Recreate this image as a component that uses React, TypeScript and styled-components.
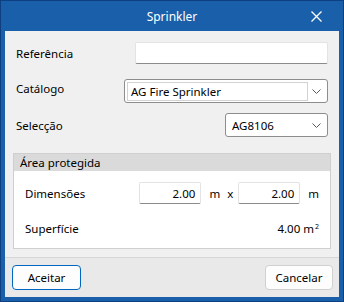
import styled, { createGlobalStyle } from 'styled-components';

const GlobalStyle = createGlobalStyle`
  html, body {
    margin: 0;
    padding: 0;
    background: #ffffff;
  }
  body {
    font-family: "Noto Sans", "Liberation Sans", sans-serif;
    font-size: 11.5px;
    color: #000000;
  }
`;

const Window = styled.div`
  width: 344px;
  height: 302px;
  box-sizing: border-box;
  border: 1px solid #0e3f80;
  background: #1a5fa9;
  display: flex;
  flex-direction: column;
  padding: 0 4px 4px;
`;

const TitleBar = styled.div`
  height: 30px;
  flex-shrink: 0;
  display: flex;
  align-items: center;
  justify-content: center;
  position: relative;
  color: #ffffff;
  font-size: 12px;
`;

const CloseButton = styled.div`
  position: absolute;
  right: 17px;
  top: 10px;
  width: 11px;
  height: 11px;
  display: flex;
`;

const Body = styled.div`
  flex: 1;
  background: #f0f0f0;
  display: flex;
  flex-direction: column;
`;

const Form = styled.div`
  flex: 1;
  padding: 11px 11px 0 11px;
  display: flex;
  flex-direction: column;
`;

const Row = styled.div<{ $top: number; $height: number }>`
  display: flex;
  align-items: center;
  justify-content: space-between;
  margin-top: ${(p) => p.$top}px;
  height: ${(p) => p.$height}px;
`;

const Label = styled.span<{ $lift?: number }>`
  position: relative;
  top: ${(p) => -(p.$lift ?? 0)}px;
`;

const TextBox = styled.div<{ $width: number }>`
  width: ${(p) => p.$width}px;
  height: 22px;
  box-sizing: border-box;
  background: #ffffff;
  border: 1px solid #e3e3e3;
  border-bottom-color: #8b8b8b;
  border-radius: 2px;
  display: flex;
  align-items: center;
  justify-content: flex-end;
  padding: 0 5px;
`;

const Select = styled.div<{ $width: number }>`
  width: ${(p) => p.$width}px;
  height: 24px;
  box-sizing: border-box;
  background: #ffffff;
  border: 1px solid #8d8d8d;
  border-radius: 3px;
  display: flex;
  align-items: center;
  padding: 0 6px 0 2px;
  gap: 4px;
`;

const SelectEdit = styled.div`
  flex: 1;
  height: 19px;
  box-sizing: border-box;
  border: 1px solid #d2d2d2;
  display: flex;
  align-items: center;
  padding: 0 3px;
`;

const SelectText = styled.div`
  flex: 1;
  padding-left: 4px;
`;

const Group = styled.div`
  margin: 16px -3px 0;
  border: 1px solid #cfcfcf;
  background: #ffffff;
  height: 96px;
  box-sizing: border-box;
  display: flex;
  flex-direction: column;
`;

const GroupHeader = styled.div`
  height: 17px;
  background: #dadada;
  display: flex;
  align-items: center;
  padding-left: 6px;
`;

const GroupBody = styled.div`
  padding: 0 11px 0 11px;
  display: flex;
  flex-direction: column;
`;

const Unit = styled.span<{ $left: number }>`
  margin-left: ${(p) => p.$left}px;
`;

const Controls = styled.div`
  display: flex;
  align-items: center;
`;

const Sup = styled.sup`
  font-size: 7px;
  vertical-align: 4px;
  margin-left: 1px;
`;

const Footer = styled.div`
  height: 40px;
  border-top: 1px solid #d6d6d6;
  background: #e9e9e9;
  display: flex;
  align-items: flex-start;
  justify-content: space-between;
  padding: 7px 6px 0 7px;
  box-sizing: border-box;
`;

const Button = styled.button<{ $primary?: boolean }>`
  width: ${(p) => (p.$primary ? 69 : 68)}px;
  height: 25px;
  background: #fdfdfd;
  border: 1px solid ${(p) => (p.$primary ? '#0067c0' : '#d0d0d0')};
  border-radius: 4px;
  font-family: inherit;
  font-size: 11.5px;
  color: #000000;
  padding: 0;
`;

const Chevron = () => (
  <svg width="9" height="5" viewBox="0 0 9 5">
    <path d="M0.5 0.5 L4.5 4.5 L8.5 0.5" fill="none" stroke="#5a5a5a" strokeWidth="1" />
  </svg>
);

export default function App() {
  return (
    <>
      <GlobalStyle />
      <Window>
        <TitleBar>
          Sprinkler
          <CloseButton>
            <svg width="11" height="11" viewBox="0 0 11 11">
              <path d="M0.5 0.5 L10.5 10.5 M10.5 0.5 L0.5 10.5" stroke="#ffffff" strokeWidth="1.3" />
            </svg>
          </CloseButton>
        </TitleBar>
        <Body>
          <Form>
            <Row $top={0} $height={22}>
              <Label>Referência</Label>
              <TextBox $width={193} />
            </Row>
            <Row $top={15} $height={24}>
              <Label $lift={3}>Catálogo</Label>
              <Select $width={204}>
                <SelectEdit>AG Fire Sprinkler</SelectEdit>
                <Chevron />
              </Select>
            </Row>
            <Row $top={10} $height={24}>
              <Label>Selecção</Label>
              <Select $width={103}>
                <SelectText>AG8106</SelectText>
                <Chevron />
              </Select>
            </Row>
            <Group>
              <GroupHeader>Área protegida</GroupHeader>
              <GroupBody>
                <Row $top={11} $height={22}>
                  <Label>Dimensões</Label>
                  <Controls>
                    <TextBox $width={62}>2.00</TextBox>
                    <Unit $left={8}>m</Unit>
                    <Unit $left={7}>x</Unit>
                    <Unit $left={5}>
                      <TextBox $width={62}>2.00</TextBox>
                    </Unit>
                    <Unit $left={8}>m</Unit>
                  </Controls>
                </Row>
                <Row $top={13} $height={22}>
                  <Label>Superfície</Label>
                  <span>
                    4.00 m<Sup>2</Sup>
                  </span>
                </Row>
              </GroupBody>
            </Group>
          </Form>
          <Footer>
            <Button $primary>Aceitar</Button>
            <Button>Cancelar</Button>
          </Footer>
        </Body>
      </Window>
    </>
  );
}
